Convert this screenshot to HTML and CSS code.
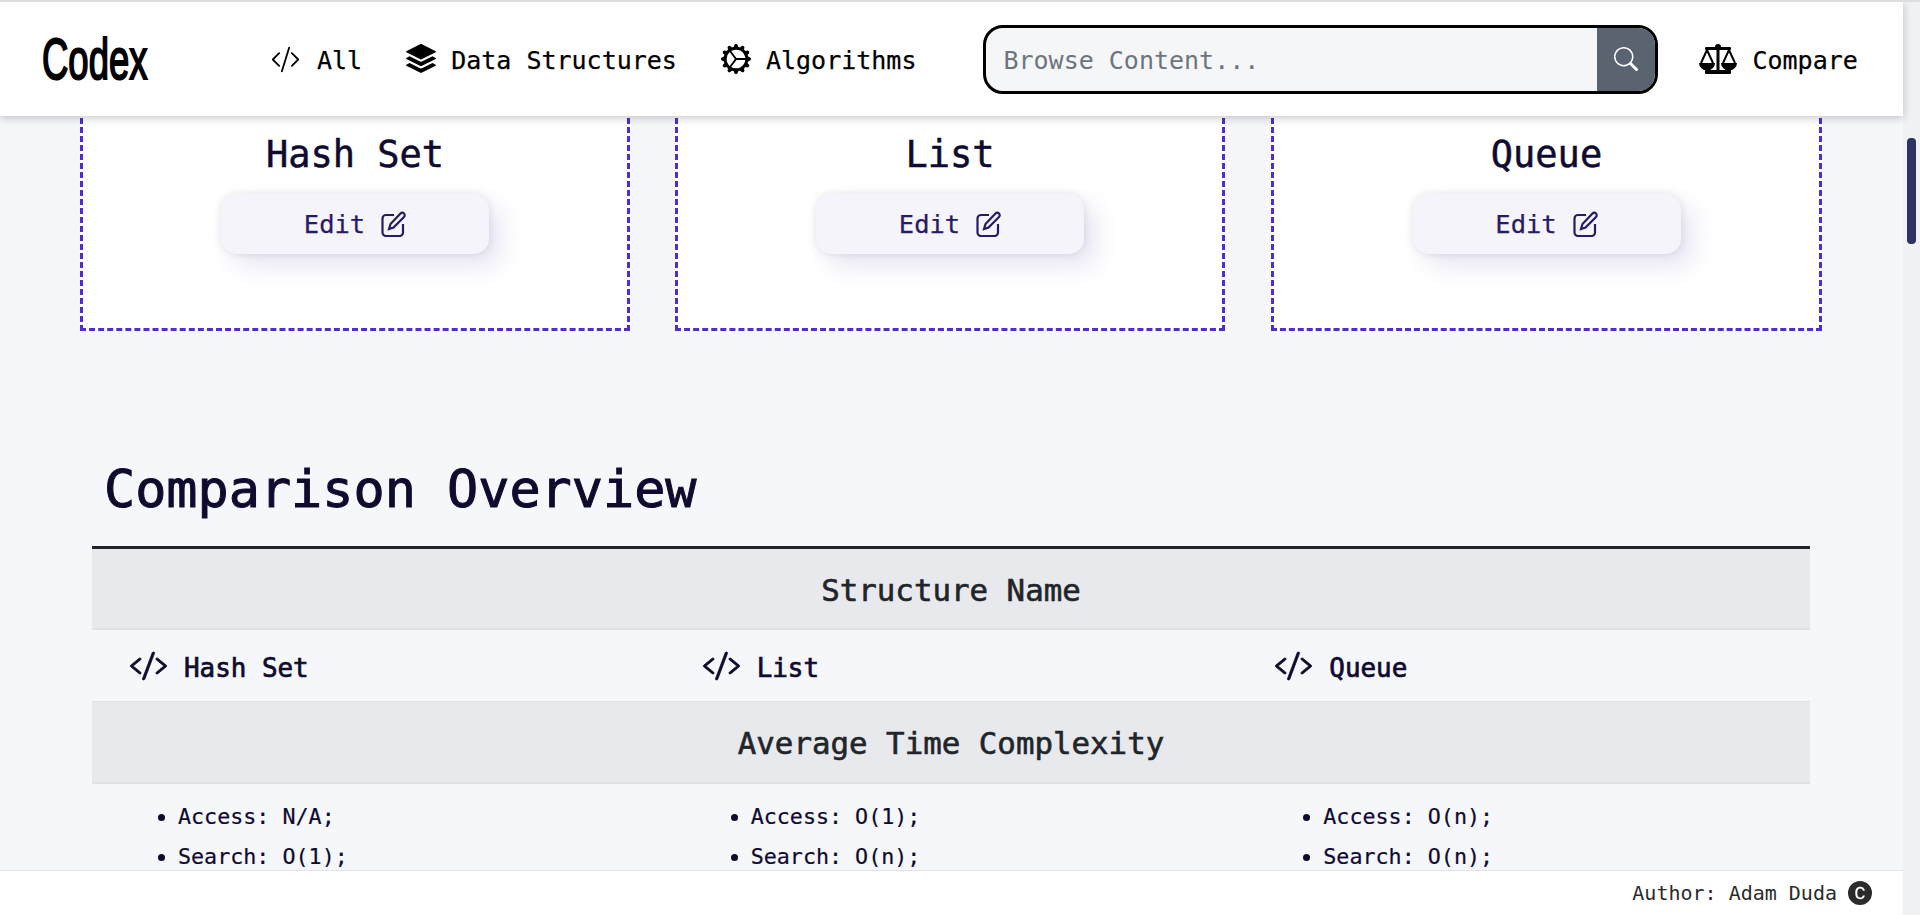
FILE: index.html
```html
<!DOCTYPE html>
<html lang="en">
<head>
<meta charset="utf-8">
<title>Codex</title>
<link rel="stylesheet" href="styles.css">
</head>
<body>
<div class="shell">
  <div class="page">
    <header class="header">
      <a class="logo"><span class="logo-text">Codex</span></a>
      <nav class="nav">
        <a class="nav-item item-all">
          <svg class="ic-all" viewBox="0 0 16 16" fill="currentColor"><path d="M10.478 1.647a.5.5 0 1 0-.956-.294l-4 13a.5.5 0 0 0 .956.294l4-13zM4.854 4.146a.5.5 0 0 1 0 .708L1.707 8l3.147 3.146a.5.5 0 0 1-.708.708l-3.5-3.5a.5.5 0 0 1 0-.708l3.5-3.5a.5.5 0 0 1 .708 0zm6.292 0a.5.5 0 0 0 0 .708L14.293 8l-3.147 3.146a.5.5 0 0 0 .708.708l3.5-3.5a.5.5 0 0 0 0-.708l-3.5-3.5a.5.5 0 0 0-.708 0z"/></svg>
          <span class="nav-label">All</span>
        </a>
        <a class="nav-item">
          <svg class="ic-30" viewBox="0 0 16 16" fill="currentColor"><path d="m14.12 10.163 1.715.858c.22.11.22.424 0 .534L8.267 15.34a.598.598 0 0 1-.534 0L.165 11.555a.299.299 0 0 1 0-.534l1.716-.858 5.317 2.659c.505.252 1.1.252 1.604 0l5.317-2.66zM7.733.063a.598.598 0 0 1 .534 0l7.568 3.784a.3.3 0 0 1 0 .535L8.267 8.165a.598.598 0 0 1-.534 0L.165 4.382a.299.299 0 0 1 0-.535L7.733.063z"/><path d="m14.12 6.576 1.715.858c.22.11.22.424 0 .534l-7.568 3.784a.598.598 0 0 1-.534 0L.165 7.968a.299.299 0 0 1 0-.534l1.716-.858 5.317 2.659c.505.252 1.1.252 1.604 0l5.317-2.659z"/></svg>
          <span class="nav-label">Data Structures</span>
        </a>
        <a class="nav-item">
          <svg class="ic-30" viewBox="0 0 16 16" fill="currentColor"><path d="M7.068.727c.243-.97 1.62-.97 1.864 0l.071.286a.96.96 0 0 0 1.622.434l.205-.211c.695-.719 1.888-.03 1.613.931l-.08.284a.96.96 0 0 0 1.187 1.187l.283-.081c.96-.275 1.65.918.931 1.613l-.211.205a.96.96 0 0 0 .434 1.622l.286.071c.97.243.97 1.62 0 1.864l-.286.071a.96.96 0 0 0-.434 1.622l.211.205c.719.695.03 1.888-.931 1.613l-.284-.08a.96.96 0 0 0-1.187 1.187l.081.283c.275.96-.918 1.65-1.613.931l-.205-.211a.96.96 0 0 0-1.622.434l-.071.286c-.243.97-1.62.97-1.864 0l-.071-.286a.96.96 0 0 0-1.622-.434l-.205.211c-.695.719-1.888.03-1.613-.931l.08-.284a.96.96 0 0 0-1.186-1.187l-.284.081c-.96.275-1.65-.918-.931-1.613l.211-.205a.96.96 0 0 0-.434-1.622l-.286-.071c-.97-.243-.97-1.62 0-1.864l.286-.071a.96.96 0 0 0 .434-1.622l-.211-.205c-.719-.695-.03-1.888.931-1.613l.284.08a.96.96 0 0 0 1.187-1.186l-.081-.284c-.275-.96.918-1.65 1.613-.931l.205.211a.96.96 0 0 0 1.622-.434l.071-.286zM12.973 8.5H8.25l-2.834 3.779A4.998 4.998 0 0 0 12.973 8.5zm0-1a4.998 4.998 0 0 0-7.557-3.779l2.834 3.78h4.723zM5.048 3.967c-.03.021-.058.043-.087.065l.087-.065zm-.431.355A4.984 4.984 0 0 0 3.002 8c0 1.455.622 2.765 1.615 3.678L7.375 8 4.617 4.322zm.344 7.646.087.065-.087-.065z"/></svg>
          <span class="nav-label">Algorithms</span>
        </a>
      </nav>
      <form class="search">
        <input class="search-input" type="text" placeholder="Browse Content...">
        <button class="search-btn" type="button">
          <svg class="ic-search" viewBox="0 0 16 16" fill="currentColor"><path d="M11.742 10.344a6.5 6.5 0 1 0-1.397 1.398h-.001c.03.04.062.078.098.115l3.85 3.85a1 1 0 0 0 1.415-1.414l-3.85-3.85a1.007 1.007 0 0 0-.115-.1zM12 6.5a5.5 5.5 0 1 1-11 0 5.5 5.5 0 0 1 11 0z"/></svg>
        </button>
      </form>
      <a class="nav-item compare">
        <svg class="ic-scale" viewBox="0 0 38 30"><circle cx="19" cy="3" r="3"/><rect x="6" y="3" width="26" height="3" rx="1"/><rect x="17.5" y="3" width="3" height="24"/><rect x="6" y="26" width="26" height="4" rx="1"/><path d="M0 19a8 7.5 0 0 0 16 0zM22 19a8 7.5 0 0 0 16 0z"/><path class="scale-line" d="M2 19 8 6l6 13M24 19 30 6l6 13"/></svg>
        <span class="nav-label">Compare</span>
      </a>
    </header>

    <main class="main">
      <section class="cards">
        <article class="card">
          <h3 class="card-title">Hash Set</h3>
          <button class="edit-btn" type="button"><span>Edit</span>
            <svg class="ic-edit" viewBox="0 0 25 26"><path d="M13 4H5a3.500 3.500 0 0 0-3.500 3.500V21.500A3.500 3.500 0 0 0 5 25H18.500A3.500 3.500 0 0 0 22 21.500V13"/><path d="M8 18l1.500-5L19.500 2.500a2.200 2.200 0 0 1 3.500 3.500L12.500 16.500z"/></svg>
          </button>
        </article>
        <article class="card">
          <h3 class="card-title">List</h3>
          <button class="edit-btn" type="button"><span>Edit</span>
            <svg class="ic-edit" viewBox="0 0 25 26"><path d="M13 4H5a3.500 3.500 0 0 0-3.500 3.500V21.500A3.500 3.500 0 0 0 5 25H18.500A3.500 3.500 0 0 0 22 21.500V13"/><path d="M8 18l1.500-5L19.500 2.500a2.200 2.200 0 0 1 3.500 3.500L12.500 16.500z"/></svg>
          </button>
        </article>
        <article class="card card-last">
          <h3 class="card-title">Queue</h3>
          <button class="edit-btn" type="button"><span>Edit</span>
            <svg class="ic-edit" viewBox="0 0 25 26"><path d="M13 4H5a3.500 3.500 0 0 0-3.500 3.500V21.500A3.500 3.500 0 0 0 5 25H18.500A3.500 3.500 0 0 0 22 21.500V13"/><path d="M8 18l1.500-5L19.500 2.500a2.200 2.200 0 0 1 3.500 3.500L12.500 16.500z"/></svg>
          </button>
        </article>
      </section>

      <section class="compare-section">
        <h2 class="compare-title">Comparison Overview</h2>
        <table class="table">
          <tbody>
            <tr><th class="row-head" colspan="3">Structure Name</th></tr>
            <tr>
              <td class="name-cell"><div class="name"><svg class="ic-name" viewBox="0 0 16 16" preserveAspectRatio="none" fill="currentColor"><path d="M10.478 1.647a.5.5 0 1 0-.956-.294l-4 13a.5.5 0 0 0 .956.294l4-13zM4.854 4.146a.5.5 0 0 1 0 .708L1.707 8l3.147 3.146a.5.5 0 0 1-.708.708l-3.5-3.5a.5.5 0 0 1 0-.708l3.5-3.5a.5.5 0 0 1 .708 0zm6.292 0a.5.5 0 0 0 0 .708L14.293 8l-3.147 3.146a.5.5 0 0 0 .708.708l3.5-3.5a.5.5 0 0 0 0-.708l-3.5-3.5a.5.5 0 0 0-.708 0z"/></svg><span class="name-label">Hash Set</span></div></td>
              <td class="name-cell"><div class="name"><svg class="ic-name" viewBox="0 0 16 16" preserveAspectRatio="none" fill="currentColor"><path d="M10.478 1.647a.5.5 0 1 0-.956-.294l-4 13a.5.5 0 0 0 .956.294l4-13zM4.854 4.146a.5.5 0 0 1 0 .708L1.707 8l3.147 3.146a.5.5 0 0 1-.708.708l-3.5-3.5a.5.5 0 0 1 0-.708l3.5-3.5a.5.5 0 0 1 .708 0zm6.292 0a.5.5 0 0 0 0 .708L14.293 8l-3.147 3.146a.5.5 0 0 0 .708.708l3.5-3.5a.5.5 0 0 0 0-.708l-3.5-3.5a.5.5 0 0 0-.708 0z"/></svg><span class="name-label">List</span></div></td>
              <td class="name-cell"><div class="name"><svg class="ic-name" viewBox="0 0 16 16" preserveAspectRatio="none" fill="currentColor"><path d="M10.478 1.647a.5.5 0 1 0-.956-.294l-4 13a.5.5 0 0 0 .956.294l4-13zM4.854 4.146a.5.5 0 0 1 0 .708L1.707 8l3.147 3.146a.5.5 0 0 1-.708.708l-3.5-3.5a.5.5 0 0 1 0-.708l3.5-3.5a.5.5 0 0 1 .708 0zm6.292 0a.5.5 0 0 0 0 .708L14.293 8l-3.147 3.146a.5.5 0 0 0 .708.708l3.5-3.5a.5.5 0 0 0 0-.708l-3.5-3.5a.5.5 0 0 0-.708 0z"/></svg><span class="name-label">Queue</span></div></td>
            </tr>
            <tr><th class="row-head" colspan="3">Average Time Complexity</th></tr>
            <tr>
              <td class="list-cell"><ul class="list"><li>Access: N/A;</li><li>Search: O(1);</li><li>Insertion: O(1);</li><li>Deletion: O(1);</li></ul></td>
              <td class="list-cell"><ul class="list"><li>Access: O(1);</li><li>Search: O(n);</li><li>Insertion: O(n);</li><li>Deletion: O(n);</li></ul></td>
              <td class="list-cell"><ul class="list"><li>Access: O(n);</li><li>Search: O(n);</li><li>Insertion: O(1);</li><li>Deletion: O(1);</li></ul></td>
            </tr>
          </tbody>
        </table>
      </section>
    </main>

    <footer class="footer">
      <span>Author: Adam Duda</span>
      <svg class="ic-copy" viewBox="0 0 16 16" fill="currentColor"><path d="M16 8A8 8 0 1 1 0 8a8 8 0 0 1 16 0ZM8.146 4.992c-1.212 0-1.927.92-1.927 2.502v1.06c0 1.571.703 2.462 1.927 2.462.979 0 1.641-.586 1.729-1.418h1.295v.093c-.1 1.448-1.354 2.467-3.03 2.467-2.091 0-3.269-1.336-3.269-3.603V7.482c0-2.261 1.201-3.638 3.27-3.638 1.681 0 2.935 1.054 3.029 2.572v.088H9.875c-.088-.879-.768-1.512-1.729-1.512Z"/></svg>
    </footer>
  </div>
  <div class="scrollbar"><div class="thumb"></div></div>
</div>
</body>
</html>
```

FILE: styles.css
```css
* { box-sizing: border-box; }

html, body { height: 100%; }

body {
  margin: 0;
  height: 915px;
  overflow: hidden;
  border-top: 2px solid #dedede;
  background: #f6f7fb;
  color: #000;
  font-family: "DejaVu Sans Mono", "Liberation Mono", monospace;
}

.shell { display: flex; height: 913px; }

.page {
  flex: 1;
  min-width: 0;
  display: flex;
  flex-direction: column;
}

/* Header */
.header {
  position: relative;
  z-index: 2;
  flex: 0 0 114px;
  display: flex;
  align-items: center;
  padding-left: 42px;
  background: #fff;
  box-shadow: 0 2px 8px rgba(0, 0, 0, .22);
}

.logo { flex: 0 0 229px; }

.logo-text {
  display: inline-block;
  font-family: "Liberation Sans", sans-serif;
  font-size: 57px;
  line-height: 60px;
  -webkit-text-stroke: 2px currentColor;
  transform: scaleX(.64);
  transform-origin: left center;
}

.nav { display: flex; align-items: center; gap: 44px; }

.nav-item {
  display: flex;
  align-items: center;
  gap: 15px;
  font-size: 25px;
  white-space: nowrap;
}

.nav-label {
  padding-top: 2px;
  -webkit-text-stroke: .25px currentColor;
}

.item-all { gap: 17px; }

.ic-all { width: 29px; height: 29px; }
.ic-30 { width: 30px; height: 30px; }

.search {
  flex: 0 0 675px;
  height: 69px;
  margin-left: 67px;
  display: flex;
  border: 3px solid #000;
  border-radius: 20px;
  overflow: hidden;
  background: #f5f6f8;
}

.search-input {
  flex: 1;
  min-width: 0;
  padding: 2px 0 0 17px;
  border: 0;
  outline: 0;
  background: transparent;
  font: 25px "DejaVu Sans Mono", "Liberation Mono", monospace;
}

.search-input::placeholder { color: #6c757d; opacity: 1; }

.search-btn {
  flex: 0 0 58px;
  display: flex;
  align-items: center;
  justify-content: center;
  padding: 0;
  border: 0;
  background: #5a6370;
  color: #fff;
}

.ic-search { width: 24px; height: 24px; }

.compare { margin-left: 41px; }

.ic-scale { width: 38px; height: 30px; fill: #000; }
.scale-line { fill: none; stroke: #000; stroke-width: 2; }

/* Main */
.main {
  flex: 1;
  min-height: 0;
  overflow: hidden;
}

.cards {
  display: grid;
  grid-template-columns: 550px 550px 552px;
  gap: 45px;
  margin-top: -16px;
  padding-left: 80px;
}

.card {
  height: 231px;
  padding-top: 25px;
  display: flex;
  flex-direction: column;
  align-items: center;
  background: #fff;
  border: 3px dashed #512bd4;
}

.card-last { margin-left: 1px; }

.card-title {
  margin: 0 0 12px;
  font-size: 37px;
  line-height: 54px;
  font-weight: 400;
  color: #0f0a2e;
  -webkit-text-stroke: .5px currentColor;
}

.edit-btn {
  width: 268px;
  height: 60px;
  display: flex;
  align-items: center;
  justify-content: center;
  gap: 16px;
  border: 0;
  border-radius: 15px;
  background: #f4f4fa;
  color: #2a1a66;
  font: 25.500px "DejaVu Sans Mono", "Liberation Mono", monospace;
  -webkit-text-stroke: .25px currentColor;
  box-shadow: 0 0 8px rgba(0, 0, 0, .1), 12px 12px 24px rgba(60, 40, 160, .12);
}

.ic-edit {
  width: 25px;
  height: 26px;
  fill: none;
  stroke: currentColor;
  stroke-width: 2.200;
}

.compare-section { margin: 0 93px 0 92px; }

.compare-title {
  margin: 123px 0 22px;
  padding-left: 12px;
  font-size: 51.800px;
  line-height: 70px;
  font-weight: 400;
  color: #0f0a2e;
  -webkit-text-stroke: 1px currentColor;
}

.table {
  width: 100%;
  table-layout: fixed;
  border-collapse: collapse;
  border-top: 3px solid #212529;
}

.row-head {
  height: 81px;
  padding: 3px 0 0;
  background: #e8e9ec;
  border-bottom: 2px solid #e0e1e4;
  color: #212529;
  font-size: 30.800px;
  font-weight: 400;
  -webkit-text-stroke: .6px currentColor;
}

.name-cell {
  height: 73px;
  padding: 2px 0 0 37px;
  border-bottom: 1px solid #e0e1e4;
}

.name {
  display: flex;
  align-items: center;
  gap: 16px;
  font-size: 25.900px;
  color: #0f0a2e;
}

.name-label { padding-top: 3px; -webkit-text-stroke: .7px currentColor; }

.ic-name { width: 39px; height: 32px; stroke: currentColor; stroke-width: .35; }

.list-cell { padding: 13px 0 0; vertical-align: top; }

.list {
  margin: 0;
  padding-left: 86px;
  font-size: 21.700px;
  line-height: 40px;
  color: #0f0a2e;
  -webkit-text-stroke: .2px currentColor;
}

/* Footer */
.footer {
  position: relative;
  z-index: 2;
  flex: 0 0 45px;
  display: flex;
  align-items: center;
  justify-content: flex-end;
  gap: 11px;
  padding-right: 31px;
  background: #fff;
  border-top: 1px solid #e4e4e6;
  color: #2b2b2b;
  font-size: 20px;
}

.ic-copy { width: 24px; height: 24px; fill-rule: evenodd; }

/* Scrollbar */
.scrollbar {
  flex: 0 0 17px;
  padding: 136px 4px 0;
  background: #eff2f3;
}

.thumb {
  height: 106px;
  border-radius: 4px;
  background: #2d3363;
}
```
